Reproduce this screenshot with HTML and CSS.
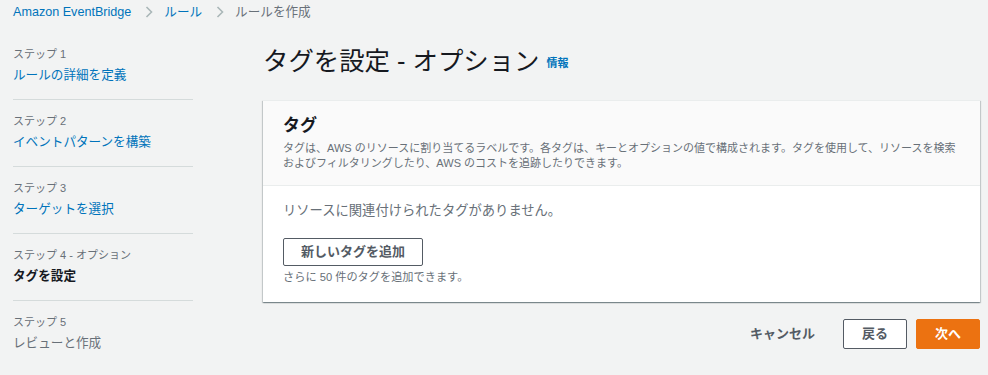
FILE: index.html
```html
<!DOCTYPE html>
<html lang="ja">
<head>
<meta charset="UTF-8">
<meta name="viewport" content="width=device-width, initial-scale=1.0">
<title>ルールを作成 - Amazon EventBridge</title>
<link rel="stylesheet" href="styles.css">
</head>
<body>

<nav class="breadcrumbs">
    <a href="#" class="crumb">Amazon EventBridge</a>
    <svg class="chevron" width="8" height="12" viewBox="0 0 8 12"><path d="M1.5 1 L6.5 6 L1.5 11" fill="none" stroke="#aab7b8" stroke-width="1.6"/></svg>
    <a href="#" class="crumb">ルール</a>
    <svg class="chevron" width="8" height="12" viewBox="0 0 8 12"><path d="M1.5 1 L6.5 6 L1.5 11" fill="none" stroke="#aab7b8" stroke-width="1.6"/></svg>
    <span class="crumb current">ルールを作成</span>
</nav>

<div class="layout">
    <ul class="steps">
        <li class="step">
            <span class="step-label">ステップ 1</span>
            <a href="#" class="step-link">ルールの詳細を定義</a>
        </li>
        <li class="step">
            <span class="step-label">ステップ 2</span>
            <a href="#" class="step-link">イベントパターンを構築</a>
        </li>
        <li class="step">
            <span class="step-label">ステップ 3</span>
            <a href="#" class="step-link">ターゲットを選択</a>
        </li>
        <li class="step">
            <span class="step-label">ステップ 4 - オプション</span>
            <span class="step-link active">タグを設定</span>
        </li>
        <li class="step last">
            <span class="step-label">ステップ 5</span>
            <span class="step-link disabled">レビューと作成</span>
        </li>
    </ul>

    <main class="content">
        <h1 class="page-title">タグを設定 - オプション <a href="#" class="info">情報</a></h1>

        <section class="panel">
            <div class="panel-header">
                <h2>タグ</h2>
                <p>タグは、AWS のリソースに割り当てるラベルです。各タグは、キーとオプションの値で構成されます。タグを使用して、リソースを検索およびフィルタリングしたり、AWS のコストを追跡したりできます。</p>
            </div>
            <div class="panel-body">
                <p class="empty">リソースに関連付けられたタグがありません。</p>
                <button class="btn">新しいタグを追加</button>
                <p class="hint">さらに 50 件のタグを追加できます。</p>
            </div>
        </section>

        <div class="actions">
            <button class="btn link-btn">キャンセル</button>
            <button class="btn">戻る</button>
            <button class="btn primary">次へ</button>
        </div>
    </main>
</div>

</body>
</html>
```

FILE: styles.css
```css
body {
    font-family: "Liberation Sans", "Noto Sans CJK JP", sans-serif;
    font-size: 13px;
    color: #16191f;
    background-color: #f2f3f3;
    margin: 0;
    padding: 0;
}
a {
    color: #0073bb;
    text-decoration: none;
}
.breadcrumbs {
    display: flex;
    align-items: center;
    height: 24px;
    padding-left: 13px;
    font-size: 12.6px;
    line-height: 24px;
}
.chevron {
    margin: 0 11px 0 14px;
}
.crumb.current {
    color: #687078;
}
.layout {
    display: flex;
    align-items: flex-start;
}
.steps {
    list-style: none;
    width: 180px;
    margin: 9px 0 0 13px;
    padding: 0;
}
.step {
    display: flex;
    flex-direction: column;
    padding: 12px 0 12px;
    border-bottom: 1px solid #d5dbdb;
}
.step.last {
    border-bottom: none;
}
.step-label {
    font-size: 11px;
    line-height: 18px;
    color: #687078;
}
.step-link {
    font-size: 12.6px;
    line-height: 24px;
}
.step-link.active {
    font-weight: bold;
    color: #16191f;
}
.step-link.disabled {
    color: #687078;
}
.content {
    flex: 1;
    margin: 0 8px 0 70px;
}
.page-title {
    margin: 19px 0 19px;
    font-size: 25.4px;
    font-weight: normal;
    line-height: 36px;
}
.info {
    font-size: 11px;
    font-weight: bold;
    vertical-align: middle;
}
.panel {
    background-color: #fff;
    border-top: 1px solid #eaeded;
    box-shadow: 0 1px 1px 0 rgba(0, 28, 36, 0.3), 1px 1px 1px 0 rgba(0, 28, 36, 0.15), -1px 1px 1px 0 rgba(0, 28, 36, 0.15);
}
.panel-header {
    background-color: #fafafa;
    border-bottom: 1px solid #eaeded;
    padding: 14px 20px 14px;
}
.panel-header h2 {
    margin: 0;
    font-size: 17px;
    line-height: 22px;
}
.panel-header p {
    margin: 4px 0 0;
    font-size: 11px;
    line-height: 15px;
    color: #687078;
}
.panel-body {
    padding: 15px 20px 17px;
}
.empty {
    margin: 0 0 17px;
    font-size: 13.3px;
    line-height: 20px;
    color: #687078;
}
.hint {
    margin: 3px 0 0;
    font-size: 11.2px;
    line-height: 16px;
    color: #687078;
}
.btn {
    font-family: inherit;
    font-size: 13px;
    font-weight: bold;
    line-height: 20px;
    height: 28px;
    padding: 0 17px;
    color: #545b64;
    background-color: #fff;
    border: 1px solid #545b64;
    border-radius: 2px;
    cursor: pointer;
}
.actions {
    display: flex;
    justify-content: flex-end;
    gap: 9px;
    margin-top: 17px;
}
.actions .btn {
    height: 30px;
    padding: 0 18px;
}
.btn.link-btn {
    background: none;
    border-color: transparent;
}
.btn.primary {
    color: #fff;
    background-color: #ec7211;
    border-color: #ec7211;
}
```
